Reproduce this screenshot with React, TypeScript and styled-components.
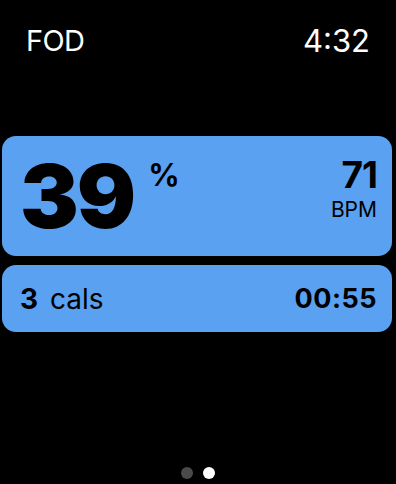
import React from 'react';
import styled, { createGlobalStyle } from 'styled-components';

const GlobalStyle = createGlobalStyle`
  html, body {
    margin: 0;
    padding: 0;
    background: #000;
  }
  body {
    font-family: Inter, "Noto Sans", "Liberation Sans", sans-serif;
    color: #fff;
  }
`;

function App() {
  return (
    <Screen>
      <GlobalStyle />
      <StatusBar>
        <Title>FOD</Title>
        <span>4:32</span>
      </StatusBar>
      <Cards>
        <MainCard>
          <Percent>
            <BigValue>39</BigValue>
            <Unit>%</Unit>
          </Percent>
          <Heart>
            <HeartValue>71</HeartValue>
            <HeartUnit>BPM</HeartUnit>
          </Heart>
        </MainCard>
        <InfoCard>
          <Cals>
            <strong>3</strong> cals
          </Cals>
          <Timer>00:55</Timer>
        </InfoCard>
      </Cards>
      <Pager>
        <Dot active={false} />
        <Dot active />
      </Pager>
    </Screen>
  );
}

export default App;

const Screen = styled.div`
  height: 484px;
  display: flex;
  flex-direction: column;
  background: #000;
`;

const StatusBar = styled.div`
  display: flex;
  justify-content: space-between;
  align-items: center;
  padding: 22px 26px 0 26px;
  font-size: 31px;
  line-height: 38px;
  color: #fff;
`;

const Title = styled.span`
  font-size: 29px;
  letter-spacing: -0.6px;
`;

const Cards = styled.div`
  display: flex;
  flex-direction: column;
  gap: 9px;
  margin: 76px 4px 0 2px;
`;

const Card = styled.div`
  background: #5ba1f1;
  border-radius: 14px;
  color: #000;
  display: flex;
  justify-content: space-between;
`;

const MainCard = styled(Card)`
  height: 120px;
  padding: 0 15px 0 18px;
  box-sizing: border-box;
  align-items: center;
`;

const Percent = styled.div`
  display: flex;
  align-items: flex-start;
`;

const BigValue = styled.span`
  font-size: 88px;
  font-weight: 900;
  line-height: 1;
  letter-spacing: -2px;
`;

const Unit = styled.span`
  font-size: 31px;
  font-weight: 700;
  line-height: 1;
  margin-left: 14px;
  margin-top: 7px;
`;

const Heart = styled.div`
  align-self: flex-start;
  display: flex;
  flex-direction: column;
  align-items: flex-end;
  margin-top: 16px;
`;

const HeartValue = styled.span`
  font-size: 37px;
  font-weight: 700;
  line-height: normal;
  letter-spacing: -1px;
`;

const HeartUnit = styled.span`
  font-size: 21px;
  line-height: normal;
`;

const InfoCard = styled(Card)`
  height: 67px;
  padding: 0 15px 0 18px;
  box-sizing: border-box;
  align-items: center;
  font-size: 28px;
`;

const Cals = styled.span`
  strong {
    font-weight: 700;
    margin-right: 4px;
  }
`;

const Timer = styled.span`
  font-size: 27px;
  font-weight: 700;
  letter-spacing: 0.5px;
`;

const Pager = styled.div`
  margin-top: auto;
  display: flex;
  justify-content: center;
  gap: 10px;
  padding-bottom: 5px;
`;

const Dot = styled.div<{ active: boolean }>`
  width: 12px;
  height: 12px;
  border-radius: 50%;
  background: ${(props) => (props.active ? '#ffffff' : '#4a4a4a')};
`;
